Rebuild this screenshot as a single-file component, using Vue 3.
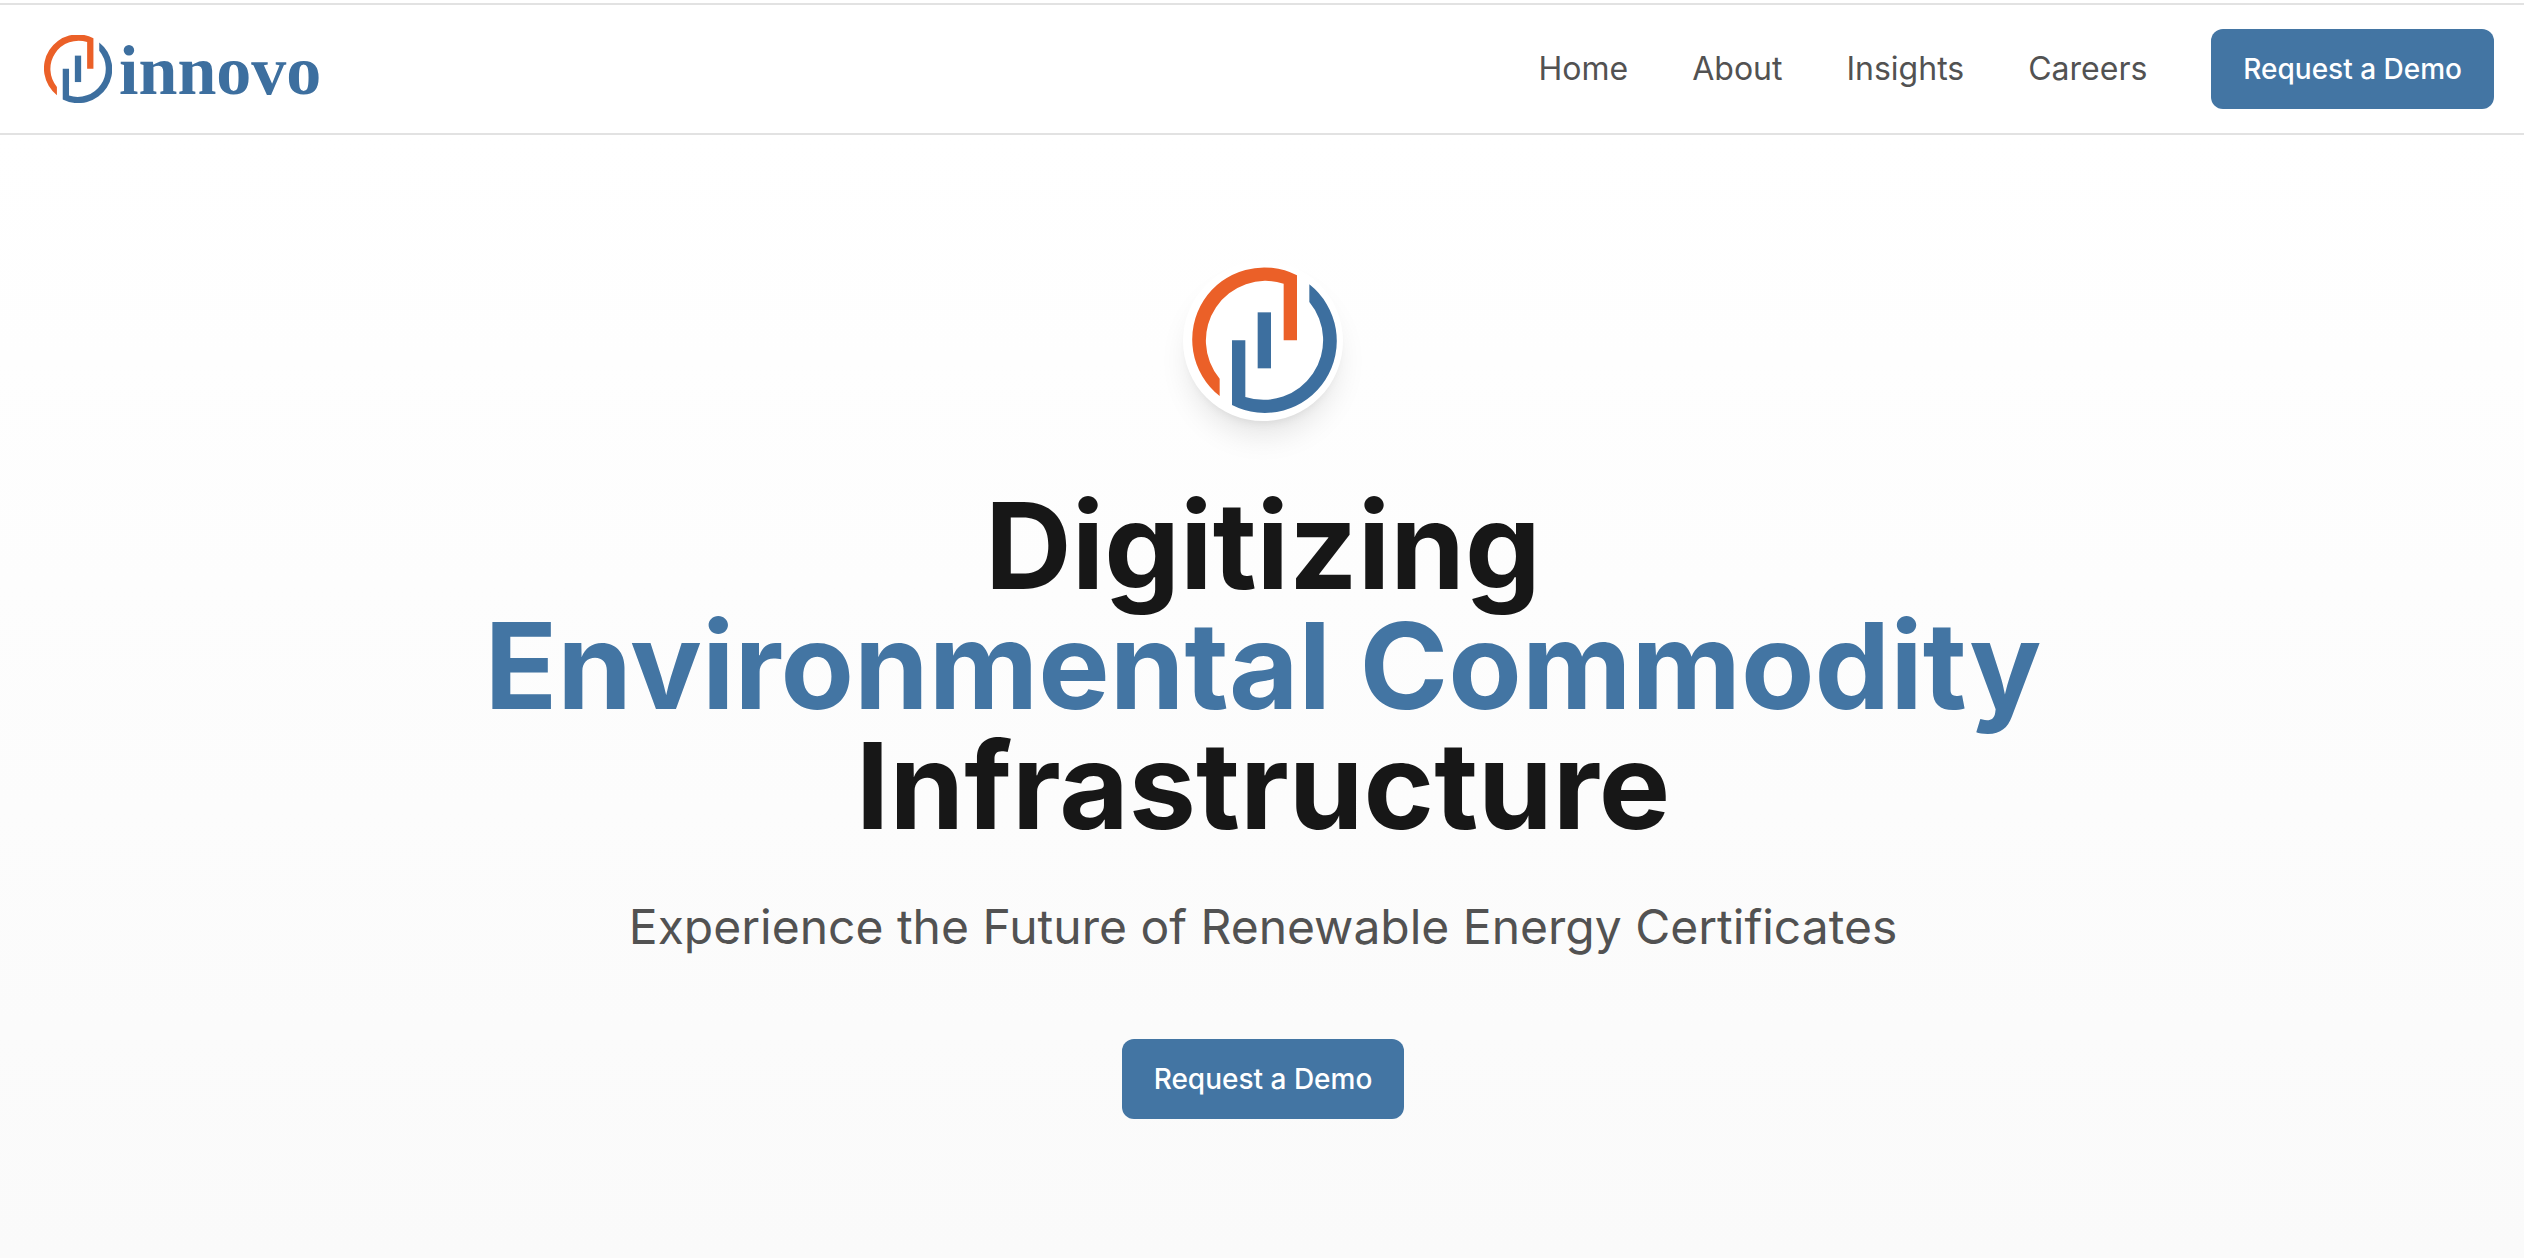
<script setup>
const links = ['Home', 'About', 'Insights', 'Careers']

const mark = {
  orange: 'M178 467A216 216 0 0 1 410 105V300H370V130A179 179 0 0 0 178 415Z',
  blue: 'M447 132A216 216 0 0 1 215 494V300H255V470A179 179 0 0 0 447 185Z',
  bar: 'M292 216H332V384H292Z'
}
</script>

<template>
  <div class="page">
    <header class="header">
      <a class="brand" href="#" aria-label="innovo">
        <svg class="brand-mark" viewBox="97 85 430 432" aria-hidden="true">
          <path class="orange" :d="mark.orange" />
          <path class="blue" :d="mark.blue" />
          <path class="blue" :d="mark.bar" />
        </svg>
        <span class="wordmark">innovo</span>
      </a>
      <nav class="nav">
        <a v-for="link in links" :key="link" class="nav-link" href="#">{{ link }}</a>
        <button class="cta" type="button">Request a Demo</button>
      </nav>
    </header>

    <main class="hero">
      <div class="badge">
        <svg class="badge-mark" viewBox="68 62 480 480" aria-hidden="true">
          <path class="orange" :d="mark.orange" />
          <path class="blue" :d="mark.blue" />
          <path class="blue" :d="mark.bar" />
        </svg>
      </div>
      <h1 class="title">
        Digitizing<br />
        <span class="accent">Environmental Commodity</span><br />
        Infrastructure
      </h1>
      <p class="lead">Experience the Future of Renewable Energy Certificates</p>
      <button class="cta" type="button">Request a Demo</button>
    </main>
  </div>
</template>

<style>
body {
  margin: 0;
  background: #fff;
}
</style>

<style scoped>
.page {
  display: flex;
  flex-direction: column;
  box-sizing: border-box;
  min-height: 100vh;
  padding-top: 3px;
  font-family: Inter, sans-serif;
}

.header {
  display: flex;
  align-items: center;
  justify-content: space-between;
  height: 128px;
  padding: 0 30px 0 44px;
  border-top: 2px solid #e2e2e2;
  border-bottom: 2px solid #e2e2e2;
  background: #fff;
}

.brand {
  display: flex;
  align-items: center;
  gap: 7px;
  text-decoration: none;
}

.brand-mark {
  width: 68px;
  height: 68px;
}

.wordmark {
  padding-top: 4px;
  color: #3d6f9f;
  font: bold 70px/68px "Liberation Serif", serif;
}

.orange {
  fill: #eb6028;
}

.blue {
  fill: #3d6f9f;
}

.nav {
  display: flex;
  align-items: center;
  gap: 64px;
}

.nav-link {
  color: #525252;
  font-size: 32px;
  line-height: 48px;
  text-decoration: none;
}

.cta {
  height: 80px;
  padding: 0 32px;
  border: 0;
  border-radius: 12px;
  background: #4375a3;
  color: #fff;
  font: 500 28px/40px Inter, sans-serif;
  cursor: pointer;
}

.hero {
  display: flex;
  flex: 1;
  flex-direction: column;
  align-items: center;
  padding: 126px 30px 124px 32px;
  background: linear-gradient(to bottom, #fff, #fafafa);
  text-align: center;
}

.badge {
  width: 160px;
  height: 160px;
  border-radius: 50%;
  background: #fff;
  box-shadow: 0 20px 30px -6px rgba(0, 0, 0, 0.1), 0 8px 12px -8px rgba(0, 0, 0, 0.1);
}

.badge-mark {
  display: block;
  width: 100%;
  height: 100%;
}

.title {
  margin: 65px 0 48px;
  color: #171717;
  font-size: 120px;
  font-weight: 700;
  line-height: 120px;
}

.accent {
  color: #4375a3;
}

.lead {
  margin: 0 0 80px;
  color: #525252;
  font-size: 48px;
  line-height: 65px;
}
</style>
